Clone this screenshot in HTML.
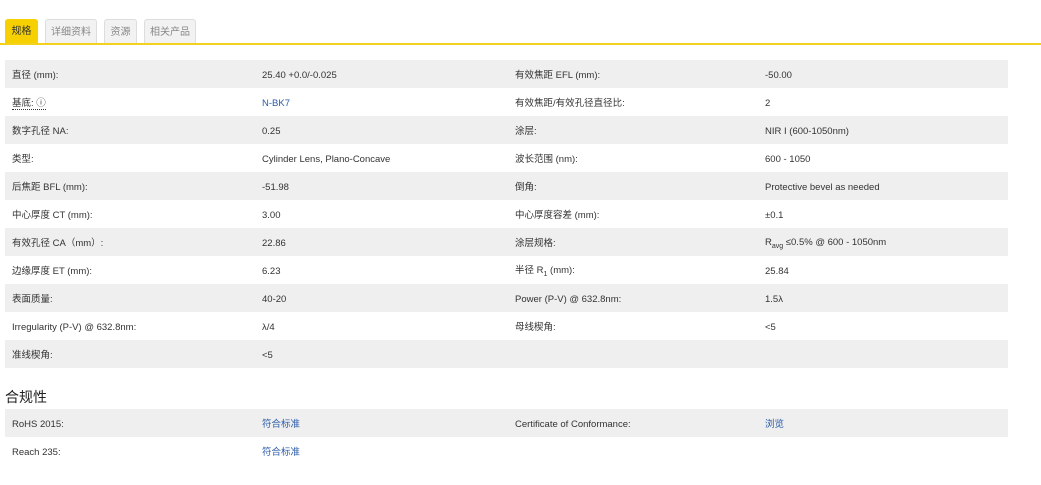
<!DOCTYPE html>
<html><head><meta charset="utf-8"><style>
body{margin:0;width:1041px;height:485px;background:#fff;font-family:"Liberation Sans","Noto Sans CJK SC",sans-serif;color:#333;position:relative;overflow:hidden}
.tab{position:absolute;top:19px;height:24px;line-height:26px;font-size:10px;text-align:center;border-radius:3px 3px 0 0;box-sizing:border-box}
.t0{left:5px;width:33px;background:#f6d000;color:#333}
.g{background:#f2f2f2;border:1px solid #ddd;border-bottom:none;color:#888}
.line{position:absolute;left:0;top:43px;width:1041px;height:2px;background:#f2d21c}
table{position:absolute;left:5px;border-collapse:collapse;width:1003px;font-size:9.5px;table-layout:fixed}
td{height:28px;padding:3px 0 0 7px;box-sizing:border-box;vertical-align:middle;line-height:12px;white-space:nowrap}
tr:nth-child(odd) td{background:#efefef}
td.a{width:250px}td.b{width:253px}td.c{width:250px}
.l{color:#2a5aa8}
.s{font-size:7px;position:relative;top:3px}
h3{position:absolute;left:5px;top:387px;margin:0;font-size:14px;font-weight:normal;color:#222}
</style></head><body>
<div class="tab t0">规格</div>
<div class="tab g" style="left:45px;width:52px">详细资料</div>
<div class="tab g" style="left:104px;width:33px">资源</div>
<div class="tab g" style="left:144px;width:52px">相关产品</div>
<div class="line"></div>
<table style="top:60px">
<tr><td class="a">直径 (mm):</td><td class="b">25.40 +0.0/-0.025</td><td class="c">有效焦距 EFL (mm):</td><td>-50.00</td></tr>
<tr><td class="a"><span style="border-bottom:1px dotted #333">基底: ⓘ</span></td><td class="b l">N-BK7</td><td class="c">有效焦距/有效孔径直径比:</td><td>2</td></tr>
<tr><td class="a">数字孔径 NA:</td><td class="b">0.25</td><td class="c">涂层:</td><td>NIR I (600-1050nm)</td></tr>
<tr><td class="a">类型:</td><td class="b">Cylinder Lens, Plano-Concave</td><td class="c">波长范围 (nm):</td><td>600 - 1050</td></tr>
<tr><td class="a">后焦距 BFL (mm):</td><td class="b">-51.98</td><td class="c">倒角:</td><td>Protective bevel as needed</td></tr>
<tr><td class="a">中心厚度 CT (mm):</td><td class="b">3.00</td><td class="c">中心厚度容差 (mm):</td><td>±0.1</td></tr>
<tr><td class="a">有效孔径 CA（mm）:</td><td class="b">22.86</td><td class="c">涂层规格:</td><td>R<span class="s">avg</span> ≤0.5% @ 600 - 1050nm</td></tr>
<tr><td class="a">边缘厚度 ET (mm):</td><td class="b">6.23</td><td class="c">半径 R<span class="s">1</span> (mm):</td><td>25.84</td></tr>
<tr><td class="a">表面质量:</td><td class="b">40-20</td><td class="c">Power (P-V) @ 632.8nm:</td><td>1.5λ</td></tr>
<tr><td class="a">Irregularity (P-V) @ 632.8nm:</td><td class="b">λ/4</td><td class="c">母线楔角:</td><td>&lt;5</td></tr>
<tr><td class="a">准线楔角:</td><td class="b">&lt;5</td><td class="c"></td><td></td></tr>
</table>
<h3>合规性</h3>
<table style="top:409px">
<tr><td class="a">RoHS 2015:</td><td class="b l">符合标准</td><td class="c">Certificate of Conformance:</td><td class="l">浏览</td></tr>
<tr><td class="a">Reach 235:</td><td class="b l">符合标准</td><td class="c"></td><td></td></tr>
</table>
</body></html>
